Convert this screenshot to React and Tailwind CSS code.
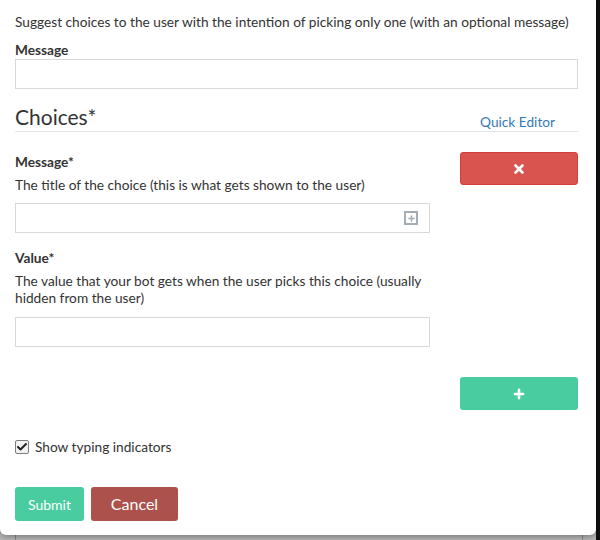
import { Check, X, Plus } from 'lucide-react';

export default function App() {
  return (
    <div className="relative w-[600px] h-[540px] bg-[#b9b9b9] overflow-hidden font-['Lato','Liberation_Sans',sans-serif] text-[#333] text-[13.7px]">
      {/* backdrop lines below modal */}
      <div className="absolute left-[15px] top-[530px] w-px h-[10px] bg-[#8a8a8a]" />
      <div className="absolute left-[582px] top-[530px] w-px h-[10px] bg-[#8a8a8a]" />
      <div className="absolute right-0 top-0 w-[4px] h-[540px] bg-[#111]" />

      <div className="relative w-[596px] h-[535px] bg-white rounded-b-[6px] shadow-[0_2px_6px_rgba(0,0,0,0.35)] px-[15px] pt-[12px]">
        <p className="leading-[20px] whitespace-nowrap">Suggest choices to the user with the intention of picking only one (with an optional message)</p>

        <label className="block font-bold mt-[9px] leading-[18px]">Message</label>
        <div className="w-[563px] h-[30px] border border-[#d9d9d9]" />

        <div className="mt-[14px] flex items-end justify-between border-b border-[#e5e5e5] w-[563px]">
          <h3 className="text-[21px] leading-[28px]">Choices*</h3>
          <a className="text-[#337ab7] leading-[20px] mr-[23px] mb-[-1px]">Quick Editor</a>
        </div>

        <div className="flex mt-[20px] w-[563px]">
          <div className="w-[415px]">
            <label className="block font-bold leading-[20px]">Message*</label>
            <p className="leading-[20px] mt-[3px]">The title of the choice (this is what gets shown to the user)</p>
            <div className="mt-[8px] h-[30px] border border-[#d9d9d9] flex items-center justify-end pr-[11px]">
              <div className="w-[14px] h-[14px] border-2 border-[#a3adb6] flex items-center justify-center">
                <Plus className="w-[9px] h-[9px] text-[#a3adb6]" strokeWidth={4} />
              </div>
            </div>

            <label className="block font-bold leading-[20px] mt-[15px]">Value*</label>
            <p className="leading-[17px] mt-[4px]">The value that your bot gets when the user picks this choice (usually hidden from the user)</p>
            <div className="mt-[11px] h-[30px] border border-[#d9d9d9]" />
          </div>
          <div className="ml-auto w-[118px]">
            <button className="w-full h-[33px] bg-[#d9534f] border border-[#d43f3a] rounded-[3px] flex items-center justify-center">
              <X className="w-[14px] h-[14px] text-white" strokeWidth={4.5} />
            </button>
          </div>
        </div>

        <div className="flex justify-end w-[563px] mt-[30px]">
          <button className="w-[118px] h-[33px] bg-[#48cca0] rounded-[3px] flex items-center justify-center">
            <Plus className="w-[14px] h-[14px] text-white" strokeWidth={4.5} />
          </button>
        </div>

        <label className="flex items-center gap-[6px] mt-[27px] leading-[20px]">
          <span className="w-[14px] h-[14px] border border-[#7d7d7d] rounded-[2px] bg-[#f2f2f2] flex items-center justify-center">
            <Check className="w-[12px] h-[12px] text-[#222]" strokeWidth={4} />
          </span>
          <span>Show typing indicators</span>
        </label>

        <div className="flex gap-[7px] mt-[30px]">
          <button className="w-[69px] h-[34px] bg-[#48cca0] rounded-[3px] text-white text-[14px]">Submit</button>
          <button className="w-[87px] h-[34px] bg-[#ad514c] rounded-[3px] text-white text-[16px]">Cancel</button>
        </div>
      </div>
    </div>
  );
}
